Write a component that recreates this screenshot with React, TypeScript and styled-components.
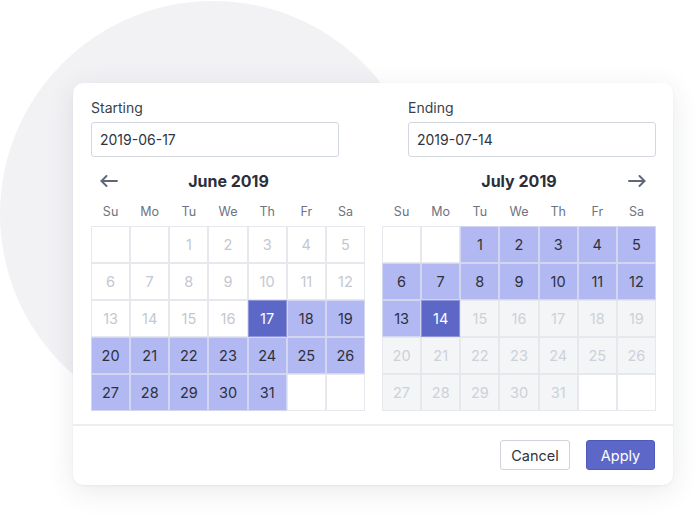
import React from "react";
import styled, { createGlobalStyle } from "styled-components";

const GlobalStyle = createGlobalStyle`
  html, body { margin: 0; padding: 0; background: #ffffff; }
  body { font-family: Inter, "Noto Sans", "Liberation Sans", sans-serif; -webkit-font-smoothing: antialiased; }
  * { box-sizing: border-box; }
`;

const Page = styled.div`
  position: relative;
  width: 700px;
  height: 522px;
  overflow: hidden;
  padding: 83px 0 0 73px;
`;

const Circle = styled.div`
  position: absolute;
  left: 0;
  top: 1px;
  width: 426px;
  height: 426px;
  border-radius: 50%;
  background: #f2f2f5;
`;

const Card = styled.div`
  position: relative;
  width: 600px;
  height: 402px;
  background: #ffffff;
  border-radius: 10px;
  box-shadow: 0 6px 28px rgba(40, 48, 70, 0.1), 0 1px 3px rgba(40, 48, 70, 0.05);
  display: flex;
  flex-direction: column;
`;

const Body = styled.div`
  display: grid;
  grid-template-columns: 275px 274px;
  column-gap: 16px;
  padding: 16px 17px 13px 18px;
`;

const Column = styled.div<{ $align: "start" | "end" }>`
  display: flex;
  flex-direction: column;
  align-items: ${(p) => (p.$align === "end" ? "flex-end" : "flex-start")};
`;

const Field = styled.label`
  display: flex;
  flex-direction: column;
  width: 248px;
`;

const Label = styled.span`
  font-size: 14px;
  line-height: 18px;
  color: #3a3f4b;
  margin-bottom: 5px;
`;

const Input = styled.input`
  height: 35px;
  width: 100%;
  border: 1.5px solid #d3d7de;
  border-radius: 3px;
  padding: 0 8px;
  font-family: inherit;
  font-size: 14px;
  color: #2f3441;
  background: #fff;
  outline: none;
`;

const MonthHeader = styled.div`
  margin-top: 11px;
  width: 100%;
  height: 26px;
  display: grid;
  grid-template-columns: 40px 1fr 40px;
  align-items: center;
`;

const NavSlot = styled.div`
  display: flex;
  align-items: center;
`;

const NavButton = styled.button<{ $side: "left" | "right" }>`
  width: 100%;
  border: none;
  background: none;
  padding: 0;
  display: flex;
  justify-content: ${(p) => (p.$side === "left" ? "flex-start" : "flex-end")};
  padding-left: ${(p) => (p.$side === "left" ? "9px" : "0")};
  padding-right: ${(p) => (p.$side === "right" ? "10px" : "0")};
  cursor: pointer;
  color: #5f6676;
`;

const MonthTitle = styled.div`
  text-align: center;
  font-size: 16px;
  font-weight: 700;
  color: #2a2f3b;
`;

const Weekdays = styled.div`
  margin-top: 7px;
  width: 274px;
  display: grid;
  grid-template-columns: repeat(7, 1fr);
  height: 20px;
  align-items: center;
`;

const Weekday = styled.div`
  text-align: center;
  font-size: 12.5px;
  color: #6d7381;
`;

const DayGrid = styled.div`
  margin-top: 5px;
  width: 274px;
  display: grid;
  grid-template-columns: repeat(7, 1fr);
  grid-auto-rows: 37px;
`;

type DayKind = "empty" | "past" | "range" | "selected" | "future";

const cellStyles: Record<DayKind, { bg: string; fg: string; border: string }> = {
  empty: { bg: "#ffffff", fg: "transparent", border: "#e6e8ee" },
  past: { bg: "#ffffff", fg: "#c4c8d0", border: "#e6e8ee" },
  range: { bg: "#b2b8f2", fg: "#2c313d", border: "#d3d6f1" },
  selected: { bg: "#5c67c6", fg: "#ffffff", border: "#8e96d9" },
  future: { bg: "#f4f5f7", fg: "#cdd1d8", border: "#e6e8ee" },
};

const Day = styled.div<{ $kind: DayKind }>`
  display: flex;
  align-items: center;
  justify-content: center;
  font-size: 14.5px;
  background: ${(p) => cellStyles[p.$kind].bg};
  color: ${(p) => cellStyles[p.$kind].fg};
  border: 1px solid ${(p) => cellStyles[p.$kind].border};
`;

const Divider = styled.div`
  height: 2px;
  background: #eceef2;
`;

const Footer = styled.div`
  display: flex;
  justify-content: flex-end;
  gap: 16px;
  padding: 14px 18px 15px;
`;

const Button = styled.button<{ $primary?: boolean }>`
  height: 30px;
  padding: 0;
  width: ${(p) => (p.$primary ? "69px" : "70px")};
  border-radius: 3px;
  font-family: inherit;
  font-size: 14.5px;
  cursor: pointer;
  border: 1.5px solid ${(p) => (p.$primary ? "#4f5abd" : "#cfd4dc")};
  background: ${(p) => (p.$primary ? "#5c67c8" : "#ffffff")};
  color: ${(p) => (p.$primary ? "#ffffff" : "#2f3441")};
`;

const Arrow = ({ dir }: { dir: "left" | "right" }) => (
  <svg width="18" height="12" viewBox="0 0 18 12" fill="none" stroke="currentColor" strokeWidth="1.9" strokeLinecap="round" strokeLinejoin="round">
    {dir === "left" ? (
      <>
        <path d="M17 6H1.5" />
        <path d="M6.5 1L1.5 6L6.5 11" />
      </>
    ) : (
      <>
        <path d="M1 6H16.5" />
        <path d="M11.5 1L16.5 6L11.5 11" />
      </>
    )}
  </svg>
);

const WEEKDAYS = ["Su", "Mo", "Tu", "We", "Th", "Fr", "Sa"];

type Cell = { day: number | null; kind: DayKind };

function buildMonth(offset: number, days: number, kindOf: (d: number) => DayKind): Cell[] {
  const cells: Cell[] = [];
  for (let i = 0; i < offset; i++) cells.push({ day: null, kind: "empty" });
  for (let d = 1; d <= days; d++) cells.push({ day: d, kind: kindOf(d) });
  while (cells.length < 35) cells.push({ day: null, kind: "empty" });
  return cells;
}

const june = buildMonth(2, 31, (d) => (d < 17 ? "past" : d === 17 ? "selected" : "range"));
const july = buildMonth(2, 31, (d) => (d < 14 ? "range" : d === 14 ? "selected" : "future"));

function Month({ title, cells, nav }: { title: string; cells: Cell[]; nav: "left" | "right" }) {
  return (
    <>
      <MonthHeader>
        <NavSlot>{nav === "left" && <NavButton $side="left" aria-label="Previous month"><Arrow dir="left" /></NavButton>}</NavSlot>
        <MonthTitle>{title}</MonthTitle>
        <NavSlot>{nav === "right" && <NavButton $side="right" aria-label="Next month"><Arrow dir="right" /></NavButton>}</NavSlot>
      </MonthHeader>
      <Weekdays>
        {WEEKDAYS.map((w) => (
          <Weekday key={w}>{w}</Weekday>
        ))}
      </Weekdays>
      <DayGrid>
        {cells.map((c, i) => (
          <Day key={i} $kind={c.kind}>
            {c.day ?? ""}
          </Day>
        ))}
      </DayGrid>
    </>
  );
}

export default function App() {
  return (
    <>
      <GlobalStyle />
      <Page>
        <Circle />
        <Card>
          <Body>
            <Column $align="start">
              <Field>
                <Label>Starting</Label>
                <Input defaultValue="2019-06-17" />
              </Field>
              <Month title="June 2019" cells={june} nav="left" />
            </Column>
            <Column $align="end">
              <Field>
                <Label>Ending</Label>
                <Input defaultValue="2019-07-14" />
              </Field>
              <Month title="July 2019" cells={july} nav="right" />
            </Column>
          </Body>
          <Divider />
          <Footer>
            <Button>Cancel</Button>
            <Button $primary>Apply</Button>
          </Footer>
        </Card>
      </Page>
    </>
  );
}
